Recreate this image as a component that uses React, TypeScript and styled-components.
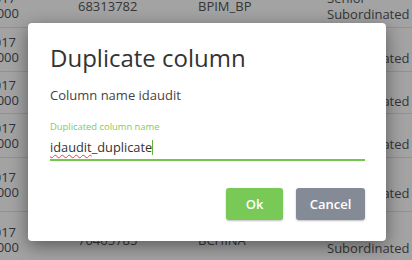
import React from "react";
import styled, { createGlobalStyle } from "styled-components";

const Global = createGlobalStyle`
  html, body { margin: 0; padding: 0; }
  body {
    width: 412px;
    height: 260px;
    overflow: hidden;
    background: #fff;
    font-family: "Open Sans", "Liberation Sans", sans-serif;
  }
`;

const Page = styled.div`
  position: relative;
  width: 412px;
  height: 260px;
  overflow: hidden;
  background: #fff;
`;

const Table = styled.div`
  display: flex;
  flex-direction: column;
  margin-top: -16px;
`;

const Row = styled.div<{ $h: number }>`
  display: grid;
  grid-template-columns: 28px 120px 129px 135px;
  height: ${(p) => p.$h}px;
  border-bottom: 1px solid #e3e3e3;
  box-sizing: border-box;
  font-size: 13px;
  color: #555;
`;

const FirstCell = styled.div`
  display: flex;
  flex-direction: column;
  justify-content: center;
  align-items: flex-end;
  overflow: hidden;
  white-space: nowrap;
  line-height: 15px;
  color: #4a4f63;
`;

const Line = styled.span<{ $pr: number }>`
  padding-right: ${(p) => p.$pr}px;
`;

const TextCell = styled.div<{ $pl: number }>`
  display: flex;
  flex-direction: column;
  justify-content: center;
  padding-left: ${(p) => p.$pl}px;
  white-space: nowrap;
  overflow: hidden;
  line-height: 16px;
`;

const Overlay = styled.div`
  position: absolute;
  inset: 0;
  background: rgba(0, 0, 0, 0.36);
  display: flex;
  align-items: flex-start;
  justify-content: flex-start;
  padding: 23px 0 0 28px;
  box-sizing: border-box;
`;

const Dialog = styled.div`
  width: 358px;
  height: 218px;
  box-sizing: border-box;
  background: #fff;
  border-radius: 4px;
  box-shadow: 0 5px 18px rgba(0, 0, 0, 0.45);
  padding: 19px 21px 21px 22px;
  display: flex;
  flex-direction: column;
`;

const Title = styled.h2`
  margin: 0;
  font-size: 24px;
  font-weight: 400;
  line-height: 31px;
  color: #333;
`;

const Info = styled.p`
  margin: 13px 0 0 0;
  font-size: 13px;
  line-height: 18px;
  color: #444;
`;

const Label = styled.label`
  margin-top: 17px;
  font-size: 9.4px;
  line-height: 12px;
  color: #7fca5f;
`;

const Field = styled.div`
  margin-top: 3px;
  height: 25px;
  box-sizing: border-box;
  border-bottom: 2px solid #74c64c;
  font-size: 12.8px;
  line-height: 18px;
  color: #333;
  display: flex;
  align-items: flex-start;
  padding-top: 2px;
`;

const Misspelled = styled.span`
  text-decoration: underline wavy #e0453a;
  text-decoration-thickness: 1px;
  text-underline-offset: 2px;
`;

const Caret = styled.span`
  display: inline-block;
  width: 1px;
  height: 15px;
  margin-top: 2px;
  background: #5fb53a;
`;

const Actions = styled.div`
  margin-top: auto;
  display: flex;
  justify-content: flex-end;
  gap: 13px;
`;

const Button = styled.button<{ $variant: "ok" | "cancel" }>`
  height: 32px;
  width: ${(p) => (p.$variant === "ok" ? 57 : 69)}px;
  border: none;
  border-radius: 3px;
  background: ${(p) => (p.$variant === "ok" ? "#78c955" : "#858a97")};
  color: #fff;
  font-family: "Open Sans", "Liberation Sans", sans-serif;
  font-size: 13px;
  font-weight: 600;
  box-shadow: 0 1px 2px rgba(0, 0, 0, 0.25);
  cursor: pointer;
  padding: 0;
`;

type RowData = {
  h: number;
  d1: string;
  d2: string;
  id: string;
  code: string;
  kind: string[];
};

const rows: RowData[] = [
  { h: 44, d1: "31/12/2017", d2: "00:00:00.000", id: "68313782", code: "BPIM_BP", kind: ["Senior", "Subordinated"] },
  { h: 44, d1: "31/12/2017", d2: "00:00:00.000", id: "68313790", code: "BPIM_BP", kind: ["Senior", "Subordinated"] },
  { h: 42, d1: "31/12/2017", d2: "00:00:00.000", id: "68313801", code: "BPIM_BP", kind: ["Senior", "Subordinated"] },
  { h: 44, d1: "31/12/2017", d2: "00:00:00.000", id: "70465713", code: "BCHINA", kind: ["Senior", "Subordinated"] },
  { h: 54, d1: "31/12/2017", d2: "00:00:00.000", id: "70465741", code: "BCHINA", kind: ["Senior", "Subordinated"] },
  { h: 56, d1: "31/12/2017", d2: "00:00:00.000", id: "70465785", code: "BCHINA", kind: ["Senior", "Subordinated"] },
];

export default function App() {
  return (
    <Page>
      <Global />
      <Table>
        {rows.map((r, i) => (
          <Row key={i} $h={r.h}>
            <FirstCell>
              <Line $pr={12}>{r.d1}</Line>
              <Line $pr={9}>{r.d2}</Line>
            </FirstCell>
            <TextCell $pl={50}>{r.id}</TextCell>
            <TextCell $pl={50}>{r.code}</TextCell>
            <TextCell $pl={50}>
              {r.kind.map((k) => (
                <span key={k}>{k}</span>
              ))}
            </TextCell>
          </Row>
        ))}
      </Table>
      <Overlay>
        <Dialog role="dialog" aria-label="Duplicate column">
          <Title>Duplicate column</Title>
          <Info>Column name idaudit</Info>
          <Label>Duplicated column name</Label>
          <Field>
            <Misspelled>idaudit</Misspelled>
            <span>_duplicate</span>
            <Caret />
          </Field>
          <Actions>
            <Button $variant="ok">Ok</Button>
            <Button $variant="cancel">Cancel</Button>
          </Actions>
        </Dialog>
      </Overlay>
    </Page>
  );
}
